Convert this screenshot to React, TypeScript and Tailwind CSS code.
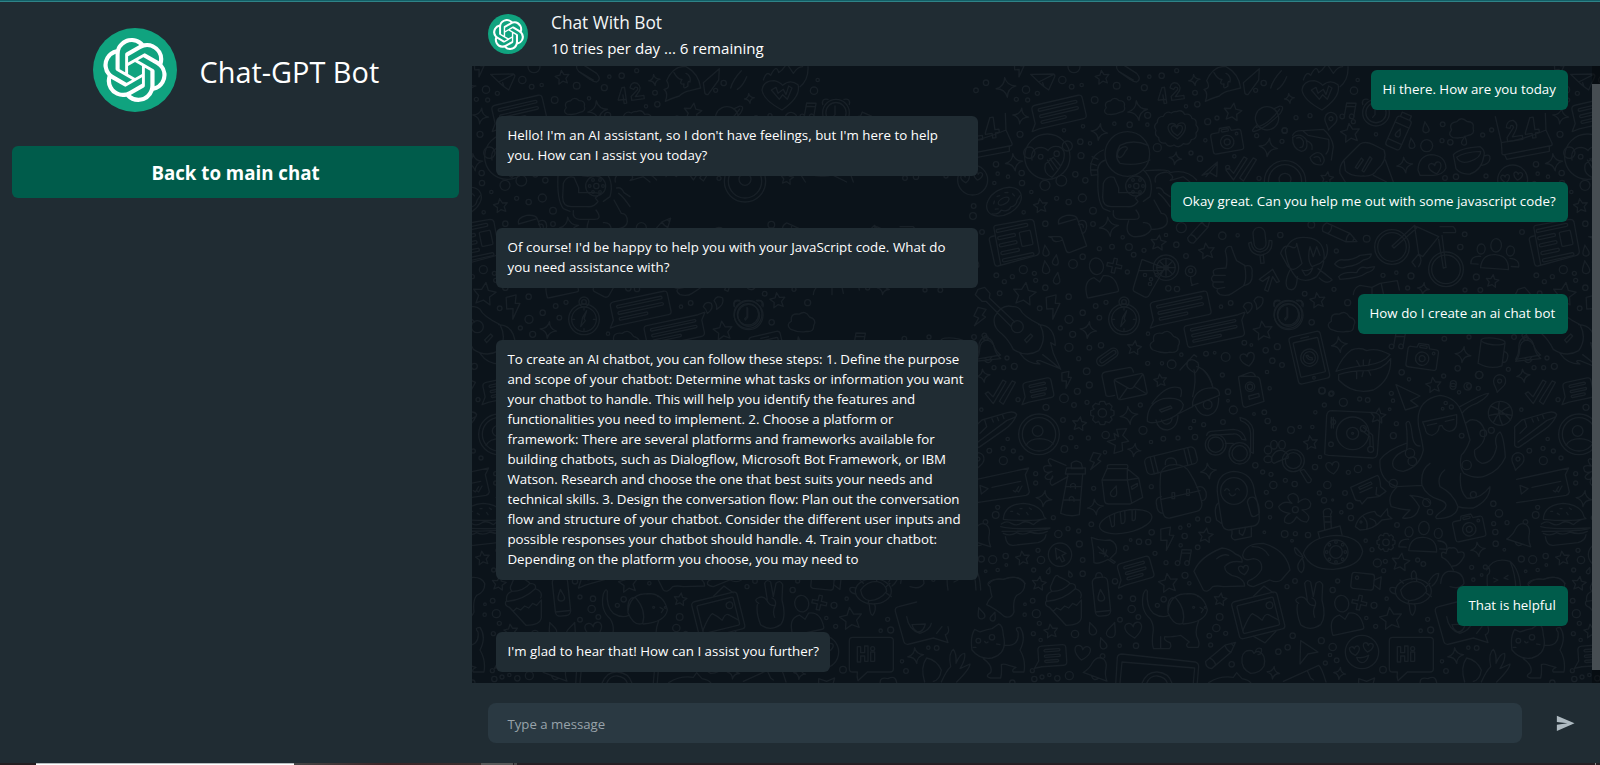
import React from "react";
import { SiOpenai } from "react-icons/si";

type Triple = [number, number, number];

/* ---------- doodle primitives ---------- */

const STAR = "M0 -1 L.28 -.38 L.95 -.31 L.46 .16 L.59 .81 L0 .49 L-.59 .81 L-.46 .16 L-.95 -.31 L-.28 -.38Z";
const SPARK = "M0 -1 Q.12 -.12 1 0 Q.12 .12 0 1 Q-.12 .12 -1 0 Q-.12 -.12 0 -1Z";
const HEART = "M0 .9 C-1.2 .1 -1.1 -.8 -.5 -.8 Q-.1 -.8 0 -.35 Q.1 -.8 .5 -.8 C1.1 -.8 1.2 .1 0 .9Z";
const DROP = "M0 -1 C.2 -.4 .55 0 .55 .45 A.55 .5 0 0 1 -.55 .45 C-.55 0 -.2 -.4 0 -1Z";
const BOLT = "M-.4 -1 L.5 -1 L.25 -.3 L.65 -.2 L-.3 1 L-.05 .1 L-.6 0Z";
const CLOUD = "M-.8 .6 Q-1.2 .3 -.8 0 Q-1 -.6 -.3 -.6 Q.1 -1 .5 -.5 Q1.1 -.4 .9 .1 Q1 .6 .4 .6 Q-.1 .8 -.8 .6Z";

const Shape = ({ d, at, rot = 0 }: { d: string; at: Triple; rot?: number }) => (
  <path d={d} transform={`translate(${at[0]} ${at[1]}) rotate(${rot}) scale(${at[2]})`} vectorEffect="non-scaling-stroke" />
);
const P = ({ d }: { d: string }) => <path d={d} vectorEffect="non-scaling-stroke" />;
const Dots = ({ list }: { list: Triple[] }) => (
  <>
    {list.map(([x, y, r], i) => (
      <circle key={i} cx={x} cy={y} r={r} vectorEffect="non-scaling-stroke" />
    ))}
  </>
);
const Many = ({ d, list, rot = 8 }: { d: string; list: Triple[]; rot?: number }) => (
  <>
    {list.map((at, i) => (
      <Shape key={i} d={d} at={at} rot={i % 2 ? rot : -rot} />
    ))}
  </>
);
const At = ({ x, y, rot = 0, children }: { x: number; y: number; rot?: number; children: React.ReactNode }) => (
  <g transform={`translate(${x} ${y}) rotate(${rot})`}>{children}</g>
);
const Box = ({ x, y, w, h, r = 6 }: { x: number; y: number; w: number; h: number; r?: number }) => (
  <rect x={x} y={y} width={w} height={h} rx={r} vectorEffect="non-scaling-stroke" />
);
const Ell = ({ x, y, rx, ry }: { x: number; y: number; rx: number; ry: number }) => (
  <ellipse cx={x} cy={y} rx={rx} ry={ry} vectorEffect="non-scaling-stroke" />
);

const Message = ({ x, y, w, h, rot, flip = false }: { x: number; y: number; w: number; h: number; rot: number; flip?: boolean }) => {
  const a = w / 2;
  const b = h / 2;
  return (
    <At x={x} y={y} rot={rot}>
      <g transform={flip ? "rotate(180)" : undefined}>
        <P d={`M${-a + 12} ${-b} H${a - 10} Q${a} ${-b} ${a} ${-b + 10} V${b - 10} Q${a} ${b} ${a - 10} ${b} H${-a + 8} L${-a - 14} ${b + 3} L${-a} ${b - 18} V${-b + 12} Q${-a} ${-b} ${-a + 12} ${-b}Z`} />
      </g>
      <Box x={-a + 18} y={-b + h * 0.18} w={w - 36} h={h * 0.11} r={4} />
      <Box x={-a + 18} y={-b + h * 0.45} w={w - 36} h={h * 0.11} r={4} />
      <Box x={-a + 18} y={-b + h * 0.7} w={w * 0.5} h={h * 0.11} r={4} />
    </At>
  );
};

const Camera = ({ x, y, rot }: { x: number; y: number; rot: number }) => (
  <At x={x} y={y} rot={rot}>
    <P d="M-38 -28 H-20 L-16 -40 H14 L18 -28 H38 Q46 -28 46 -20 V26 Q46 34 38 34 H-38 Q-46 34 -46 26 V-20 Q-46 -28 -38 -28Z" />
    <Dots list={[[0, 4, 20], [0, 4, 9], [32, -16, 4]]} />
    <Box x={-12} y={-35} w={22} h={7} r={3} />
  </At>
);
const Person = ({ x, y, rot = -12 }: { x: number; y: number; rot?: number }) => (
  <At x={x} y={y} rot={rot}>
    <Ell x={0} y={-42} rx={21} ry={25} />
    <P d="M-46 44 Q-50 -8 -14 -10 L0 6 L14 -10 Q50 -8 50 40 Q50 46 44 46 H-40 Q-46 46 -46 44Z" />
  </At>
);
const People = ({ x, y, rot }: { x: number; y: number; rot: number }) => (
  <At x={x} y={y} rot={rot}>
    <Ell x={0} y={-34} rx={16} ry={20} />
    <Ell x={-44} y={-20} rx={12} ry={15} />
    <Ell x={44} y={-20} rx={12} ry={15} />
    <P d="M-42 36 Q-40 -6 0 -6 Q40 -6 42 36Z" />
    <P d="M-50 26 H-72 Q-74 2 -44 2 M50 26 H72 Q74 2 44 2" />
  </At>
);
const Checks = ({ x, y, rot }: { x: number; y: number; rot: number }) => (
  <At x={x} y={y} rot={rot}>
    <P d="M-44 6 L-36 0 L-20 14 L6 -38 L16 -34 L-18 34Z M4 18 L34 -38 L44 -34 L12 34 L0 26Z" />
  </At>
);
const Plus = ({ x, y }: { x: number; y: number }) => (
  <At x={x} y={y} rot={12}>
    <P d="M-5 -22 H5 V-5 H22 V5 H5 V22 H-5 V5 H-22 V-5 H-5Z" />
  </At>
);
const Music = ({ x, y }: { x: number; y: number }) => (
  <At x={x} y={y} rot={10}>
    <P d="M-8 20 V-22 L20 -26 V14 M-8 -12 L20 -16" />
    <Dots list={[[-14, 20, 7], [14, 15, 7]]} />
  </At>
);
const Gear = ({ x, y, r }: { x: number; y: number; r: number }) => (
  <g>
    <circle cx={x} cy={y} r={r * 0.36} vectorEffect="non-scaling-stroke" />
    {[0, 45, 90, 135, 180, 225, 270, 315].map((a) => (
      <At key={a} x={x} y={y} rot={a}>
        <P d={`M${-r * 0.3} ${-r * 0.75} L${-r * 0.18} ${-r} H${r * 0.18} L${r * 0.3} ${-r * 0.75} L${r * 0.36} ${-r * 0.7}`} />
      </At>
    ))}
  </g>
);
const Clock = ({ x, y, r }: { x: number; y: number; r: number }) => (
  <g>
    <Dots list={[[x, y, r], [x, y, r * 0.76]]} />
    <P d={`M${x - 3} ${y - r * 0.5} V${y + 6} L${x - 10} ${y + 14} M${x - r} ${y - r * 0.6} Q${x - r * 1.1} ${y - r * 1.1} ${x - r * 0.6} ${y - r} M${x + r} ${y - r * 0.6} Q${x + r * 1.1} ${y - r * 1.1} ${x + r * 0.6} ${y - r}`} />
  </g>
);
const Bell = ({ x, y, rot }: { x: number; y: number; rot: number }) => (
  <At x={x} y={y} rot={rot}>
    <P d="M-38 26 Q-24 10 -22 -10 Q-18 -32 0 -34 Q18 -32 22 -10 Q24 10 38 26Z M-10 28 Q0 40 10 28" />
    <circle cx={0} cy={-40} r={7} vectorEffect="non-scaling-stroke" />
  </At>
);
const Pin = ({ x, y }: { x: number; y: number }) => (
  <At x={x} y={y} rot={12}>
    <P d="M0 26 C-6 10 -20 4 -18 -10 A18 18 0 0 1 18 -10 C20 4 6 10 0 26Z" />
    <circle cx={0} cy={-9} r={6} vectorEffect="non-scaling-stroke" />
  </At>
);
const Pencil = ({ x, y, rot, s = 1 }: { x: number; y: number; rot: number; s?: number }) => (
  <g transform={`translate(${x} ${y}) rotate(${rot}) scale(${s})`}>
    <P d="M-50 -14 H26 L56 0 L26 14 H-50 Q-62 0 -50 -14Z M-34 -14 Q-26 0 -34 14 M26 -14 Q20 0 26 14 M44 -6 V6" />
  </g>
);

/* ---------- doodle regions ---------- */

const RegionA = () => (
  <g transform="translate(970 60) scale(.33333)">
    <Dots
      list={[[48, 68, 8], [18, 91, 7], [168, 89, 11], [202, 100, 6], [277, 60, 11], [305, 80, 7], [335, 75, 5], [312, 20, 18], [440, 77, 10], [477, 115, 5], [523, 83, 9], [538, 50, 5], [575, 47, 8], [620, 32, 6], [374, 120, 10], [139, 118, 6], [173, 120, 6], [150, 223, 9], [433, 191, 5], [479, 194, 8], [532, 194, 5], [533, 166, 9], [562, 263, 12], [331, 245, 8], [360, 250, 5], [282, 211, 5], [333, 287, 9], [339, 199, 5], [663, 279, 6], [690, 296, 8], [713, 185, 9], [741, 174, 6], [682, 133, 8], [675, 98, 7], [881, 69, 8], [857, 91, 6], [648, 139, 5], [706, 241, 5], [793, 289, 5], [860, 227, 6], [936, 244, 6], [944, 212, 8], [78, 313, 8], [83, 341, 5], [114, 350, 5], [155, 339, 8], [156, 369, 8], [73, 369, 5], [316, 343, 8], [346, 361, 8], [337, 414, 12], [296, 426, 8], [260, 415, 6], [369, 452, 10], [369, 492, 7], [226, 491, 8], [161, 457, 5], [11, 438, 7], [184, 396, 5], [36, 516, 7], [9, 468, 10], [634, 503, 15], [619, 554, 8], [588, 525, 5], [757, 527, 11], [803, 526, 5], [931, 525, 8], [648, 588, 7], [388, 566, 6], [426, 560, 7], [477, 561, 10], [491, 584, 7], [522, 571, 6], [458, 532, 5], [472, 636, 6], [338, 590, 8], [309, 612, 13], [160, 629, 12], [193, 640, 6], [197, 661, 6], [226, 683, 8], [127, 650, 6], [79, 646, 7], [103, 665, 6], [89, 700, 7], [209, 745, 7], [296, 710, 8], [338, 758, 8], [377, 738, 7], [388, 773, 7], [408, 727, 6], [297, 778, 12], [271, 804, 6], [308, 823, 9], [297, 862, 12], [358, 863, 7], [393, 856, 8], [326, 896, 6], [534, 821, 5], [533, 910, 6], [576, 910, 5], [605, 913, 13], [634, 884, 5], [708, 881, 7], [734, 878, 4], [595, 685, 8], [621, 687, 8], [753, 740, 5], [782, 729, 7], [823, 848, 7], [844, 855, 4], [767, 891, 13], [887, 871, 8], [922, 860, 9], [907, 902, 8], [936, 915, 7], [111, 894, 6], [72, 923, 6], [101, 923, 6], [133, 919, 9], [773, 322, 6], [867, 355, 6], [12, 831, 7]]}
    />
    <Many d={STAR} list={[[397, 53, 22], [788, 157, 28], [212, 438, 22], [565, 549, 24], [710, 574, 25], [163, 703, 36], [879, 813, 30], [493, 864, 22]]} />
    <Many d={SPARK} list={[[108, 82, 30], [152, 168, 24], [503, 152, 30], [388, 216, 25], [132, 307, 26], [616, 295, 19], [673, 60, 17], [895, 262, 28], [417, 500, 29], [355, 810, 25], [958, 115, 15]]} />
    <Message x={267} y={156} w={155} h={72} rot={-13} />
    <Message x={632} y={745} w={175} h={72} rot={-12} />
    <Message x={733} y={813} w={175} h={66} rot={-12} flip />
    <Many d={CLOUD} list={[[434, 140, 32], [586, 848, 44]]} />
    <Many d={DROP} list={[[227, 572, 17], [257, 600, 16], [227, 622, 20], [261, 655, 18]]} />
    <Many d={BOLT} list={[[250, 742, 34], [28, 772, 28], [148, 26, 24]]} rot={14} />
    <Shape d={HEART} at={[833, 898, 23]} rot={-12} />
    <P d="M182 43 L250 42 Q256 44 254 50 L236 90 L222 80 L206 66Z M206 66 L250 44 M222 80 L218 68" />
    <P d="M440 18 Q448 8 462 16 L500 40 Q516 58 500 66 Q490 66 480 58 L446 34 Q438 26 440 18Z M446 34 L490 60" />
    <P d="M710 62 Q730 16 768 20 Q806 40 812 84 L780 92 Q760 96 748 108 Q722 116 706 124 Q716 98 702 88 Q724 86 710 62Z M732 38 Q744 60 756 58 Q746 74 762 72 Q758 92 774 78 Q772 60 780 66 Q784 48 768 40" />
    <P d="M820 68 L868 26 L866 60 L834 104 Q824 104 824 96Z M902 84 Q908 60 934 32 M922 88 Q940 76 950 50" />
    <At x={598} y={98} rot={-8}>
      <P d="M-36 18 H-14 M-36 16 L-20 -18 H-12 V30 H-20 V4 M4 -14 Q10 -34 28 -24 Q42 -10 24 6 L16 14 H42 V24 H4 V12 L26 -6 Q28 -14 20 -14 L14 -8Z" />
    </At>
    <P d="M620 155 q16 -8 24 8 q18 -4 22 12 q16 2 12 20 q12 12 0 24 q4 18 -14 20 q-6 18 -24 12 q-12 16 -28 4 q-16 10 -26 -6 q-20 2 -20 -16 q-14 -8 -8 -22 q-10 -14 4 -24 q0 -18 18 -18 q8 -18 24 -10 q8 -6 16 -4Z" />
    <Shape d={HEART} at={[621, 212, 28]} rot={-4} />
    <Shape d={HEART} at={[621, 211, 18]} rot={-4} />
    <Camera x={771} y={242} rot={-10} />
    <At x={891} y={175} rot={-24}>
      <circle cx={0} cy={0} r={35} vectorEffect="non-scaling-stroke" />
      <P d="M-34 6 Q-62 14 -52 20 Q-20 26 40 4 Q66 -12 50 -18 L30 -18 M-40 12 Q0 18 46 -10" />
    </At>
    <Dots list={[[232, 290, 68], [212, 290, 7], [260, 281, 8], [178, 278, 17], [292, 258, 15], [225, 376, 15], [274, 362, 16]]} />
    <P d="M186 300 Q180 264 214 262 Q228 264 234 272 Q244 256 266 260 Q290 268 280 302 Q270 326 246 352 Q218 340 226 312 L250 292 L272 318 M232 300 L250 330 M240 296 L262 326" />
    <Dots list={[[472, 282, 67], [497, 378, 30], [499, 378, 8], [479, 378, 4], [489, 360, 4], [510, 360, 4], [519, 378, 4], [510, 396, 4], [489, 396, 4]]} />
    <P d="M540 300 Q500 320 450 310 Q430 290 450 256 Q490 236 534 256 M442 284 Q446 262 466 260 Q478 262 466 274 Q456 296 446 292Z M400 270 Q352 290 364 346 L384 344 Q378 310 406 300 M366 290 L384 298 M362 310 L380 316 M362 330 L380 330 M384 346 Q380 420 400 446 L420 454 M400 370 Q410 346 432 352 L446 384 V398 H490 L512 400 L496 414 L504 424 Q494 442 470 440 H424 Q398 440 398 412Z M520 330 Q554 360 540 410 L520 424 M430 452 Q426 478 450 478 H490 Q520 480 498 450 M476 482 Q462 520 490 530 Q530 532 544 508 Q542 486 520 488 M544 508 Q590 508 592 484 Q592 460 574 460 L552 420 M528 332 Q600 326 600 338 Q650 326 680 360" />
    <P d="M556 366 Q550 340 590 336 Q620 350 600 362 L640 350 Q660 366 660 366 M560 384 Q574 380 582 398 L600 410 M566 400 Q580 410 600 440" />
    <At x={102} y={425} rot={-30}>
      <Ell x={0} y={0} rx={56} ry={38} />
      <Ell x={0} y={-2} rx={18} ry={9} />
      <P d="M-50 14 Q-34 26 -20 18 Q-6 34 10 24 Q26 30 36 16 L52 8 M-30 -10 l6 -6 M-10 -24 l8 2 M16 -22 l8 4 M34 -8 l2 8 M-34 6 l8 4" />
    </At>
    <P d="M72 506 Q70 498 78 496 L180 478 Q190 478 192 486 L208 574 Q208 584 200 586 L84 618 Q76 620 74 612 L58 540 Q56 530 72 528 M72 506 L92 614" />
    <At x={136} y={542} rot={-12}>
      <Box x={-50} y={-44} w={96} h={9} r={4} />
      <Box x={-50} y={-22} w={54} h={9} r={4} />
      <Box x={-50} y={0} w={54} h={9} r={4} />
      <Box x={16} y={-22} w={34} h={44} r={4} />
      <Box x={-50} y={24} w={56} h={9} r={4} />
      <Box x={-50} y={46} w={96} h={9} r={4} />
    </At>
    <P d="M266 492 L322 476 L350 558 L298 578 Q290 578 288 570 L278 540 Q250 552 246 534 L236 530 L268 530 Q276 530 278 540 M266 492 Q260 474 290 466 Q318 464 322 476 M326 484 Q348 474 350 498 Q348 520 336 520 M326 494 Q340 488 340 502" />
    <Person x={388} y={660} />
    <Plus x={433} y={617} />
    <Dots list={[[588, 623, 38], [588, 623, 28], [588, 623, 7], [662, 634, 16], [662, 632, 6], [525, 645, 5], [543, 658, 5], [560, 645, 5], [540, 672, 5]]} />
    <P d="M516 598 L584 624 L536 708 Q530 714 522 710 L492 694 Q488 690 490 684Z M506 632 H580 M588 595 V650 M560 623 H616 M568 603 L608 643 M568 643 L608 603 M662 650 Q662 668 668 676 M664 676 L684 670" />
    <P d="M766 574 Q768 556 784 560 Q794 590 800 602 L824 616 Q832 660 820 678 L786 700 Q772 710 750 704 Q736 694 744 686 Q724 684 730 666 Q718 656 732 644 Q724 628 744 626 L768 624 Q774 600 766 574Z M744 686 L764 682 M730 666 H760 M732 646 H766 M826 618 Q850 612 846 640 Q850 670 824 676" />
    <P d="M868 658 L908 628 L928 664 L920 668 L908 650 L894 694 L884 690 L898 650 L878 664Z M820 740 Q826 722 844 730 Q852 746 832 760 Q830 748 820 740Z M852 722 Q860 704 878 714 Q884 734 860 748 Q862 734 852 722Z" />
    <Clock x={956} y={766} r={43} />
    <Dots list={[[142, 800, 18], [462, 778, 46], [462, 778, 37], [462, 726, 15], [462, 726, 7]]} />
    <P d="M462 776 L470 752 L458 772 L452 800 L466 782Z M462 744 V750 M428 778 H434 M490 778 H496 M462 806 V812" />
    <P d="M16 704 L24 688 L44 682 L60 700 L58 714 L134 786 M16 704 L36 724 L48 724 L124 800 M128 740 Q96 730 74 770 Q66 800 96 822 Q116 840 130 868 Q170 894 206 872 Q232 836 210 794 Q160 770 150 748 Q140 738 128 740Z M164 840 L182 822 L188 828 L170 848Z M206 794 Q254 796 256 856 L242 848 Q250 880 250 880 L272 928 Q240 900 218 884 M150 880 Q172 912 210 912 Q190 900 210 902 L270 926" />
    <At x={412} y={891} rot={-35}>
      <Box x={-36} y={-14} w={72} h={28} r={14} />
      <Box x={-26} y={-6} w={56} h={12} r={6} />
    </At>
    <Bell x={50} y={866} rot={-10} />
    <At x={870} y={548} rot={-6}>
      <Box x={-18} y={-46} w={36} h={66} r={18} />
      <P d="M-34 -2 Q-34 34 0 38 Q36 34 36 -2 L28 -4 Q26 26 0 28 Q-26 26 -26 -4Z M-4 38 V62 H6 V38" />
    </At>
    <Pencil x={690} y={510} rot={-48} s={0.85} />
    <Checks x={812} y={328} rot={6} />
    <P d="M696 346 L742 306 L740 350 L720 338Z M708 350 L742 310" />
    <Dots list={[[945, 364, 62], [945, 364, 50], [945, 358, 18]]} />
    <P d="M630 930 L672 884 L680 890 M650 908 Q664 890 684 908 Q690 926 674 940 M670 936 Q640 920 656 900 M680 920 Q716 930 728 980" />
  </g>
);

const RegionB = () => (
  <g transform="translate(970 370) scale(.33333)">
    <Dots
      list={[[350, 4, 10], [358, 45, 9], [322, 64, 9], [282, 85, 13], [312, 105, 7], [351, 97, 6], [228, 112, 9], [144, 89, 6], [34, 119, 5], [279, 150, 7], [511, 105, 6], [407, 195, 11], [519, 181, 12], [303, 203, 6], [355, 204, 6], [283, 237, 10], [319, 231, 5], [405, 247, 5], [543, 216, 5], [580, 206, 7], [624, 204, 6], [675, 201, 8], [661, 174, 5], [672, 153, 5], [701, 164, 6], [759, 156, 7], [774, 65, 8], [774, 92, 4], [790, 120, 12], [757, 15, 6], [899, 55, 5], [891, 6, 5], [883, 127, 7], [893, 153, 8], [852, 132, 4], [913, 176, 6], [113, 207, 5], [58, 242, 7], [99, 235, 6], [130, 243, 6], [100, 272, 12], [153, 264, 6], [197, 311, 6], [197, 339, 6], [371, 355, 6], [544, 350, 6], [83, 412, 6], [77, 435, 10], [250, 443, 6], [265, 492, 11], [294, 476, 6], [326, 483, 6], [364, 463, 7], [328, 522, 9], [338, 570, 7], [204, 541, 6], [213, 570, 11], [68, 569, 12], [107, 558, 8], [34, 567, 9], [47, 604, 4], [83, 600, 5], [109, 585, 4], [191, 600, 6], [338, 611, 8], [188, 692, 7], [199, 731, 12], [164, 734, 5], [165, 703, 4], [208, 760, 6], [190, 791, 6], [212, 810, 5], [315, 792, 11], [435, 634, 8], [450, 681, 6], [489, 686, 8], [485, 717, 11], [505, 741, 7], [450, 749, 7], [449, 827, 5], [498, 827, 8], [562, 706, 6], [581, 688, 8], [555, 550, 6], [588, 578, 6], [645, 616, 9], [658, 640, 5], [545, 487, 8], [535, 516, 8], [507, 515, 8], [482, 510, 4], [468, 534, 7], [631, 473, 5], [657, 466, 5], [644, 498, 8], [632, 526, 5], [683, 532, 7], [683, 447, 6], [714, 449, 8], [883, 487, 4], [900, 442, 5], [889, 367, 6], [897, 404, 11], [878, 306, 6], [903, 313, 6], [856, 286, 8], [910, 345, 11], [946, 331, 6], [749, 741, 10], [739, 774, 11], [718, 797, 7], [722, 825, 6], [767, 790, 6], [785, 883, 8], [925, 845, 8], [953, 832, 8], [187, 902, 6], [193, 927, 8], [216, 921, 6], [238, 915, 5], [262, 925, 8], [298, 917, 12], [127, 938, 8], [944, 492, 10], [951, 650, 6]]}
    />
    <Many d={STAR} list={[[571, 32, 20], [328, 162, 22], [158, 565, 22], [207, 641, 22], [243, 784, 22], [707, 497, 23], [595, 640, 30], [751, 689, 20]]} />
    <Many d={SPARK} list={[[477, 136, 27], [493, 240, 20], [715, 303, 24], [222, 386, 24], [376, 411, 24], [910, 908, 19], [40, 17, 20]]} />
    <Many d={DROP} list={[[32, 730, 18], [70, 740, 14], [366, 776, 20], [426, 780, 24], [398, 820, 18], [236, 602, 10], [300, 612, 10], [433, 364, 17]]} rot={20} />
    <Many d={BOLT} list={[[290, 30, 24], [375, 275, 26], [592, 507, 33]]} rot={12} />
    <Many d={HEART} list={[[491, 780, 27], [337, 848, 25], [821, 600, 16]]} />
    <Checks x={90} y={68} rot={4} />
    <Message x={205} y={60} w={86} h={60} rot={-12} />
    <Message x={497} y={602} w={100} h={66} rot={-16} />
    <Message x={247} y={857} w={84} h={62} rot={-4} />
    <Music x={640} y={562} />
    <P d="M396 18 Q396 8 406 6 L480 -8 Q488 -6 490 6 M396 18 L408 76 Q412 82 434 76" />
    <At x={481} y={50} rot={-12}>
      <Box x={-44} y={-32} w={90} h={64} r={8} />
      <P d="M-42 -28 L-6 4 Q2 8 8 4 L44 -28 M-40 30 L-10 2 M42 30 L12 2" />
    </At>
    <Gear x={397} y={129} r={35} />
    <Dots list={[[207, 193, 61], [207, 193, 50], [203, 183, 16], [270, 554, 35]]} />
    <P d="M168 226 Q180 206 208 206 Q240 208 250 222 M256 534 L288 550 L276 556 L284 572 L276 576 L268 560 L260 568Z" />
    <P d="M14 170 L36 150 Q70 140 112 128 Q134 122 140 134 Q130 160 104 178 L30 230 Q20 236 14 226Z M24 216 L110 152 Q126 146 138 140 M44 150 L50 170 L30 190 M66 146 l4 10 M82 142 l4 10 M98 136 l4 10" />
    <P d="M440 178 L470 176 L458 196 L476 214 L456 218 L458 242 L432 250 L436 226 L412 214 L436 208 L432 190 L446 200Z" />
    <P d="M304 280 Q318 266 334 280 L338 296 H304Z M290 294 H346 V312 H286Z M294 312 L272 430 Q300 442 328 434 L338 314 M286 350 H332 M280 390 H330 M302 352 V344 Q310 336 316 344 V356 M298 392 V384 Q306 374 312 386 V394 M288 286 L240 266 Q228 270 244 288 Q216 284 222 298 Q224 312 246 304 Q214 320 232 328 Q250 330 248 318 Q234 340 246 346 L294 320" />
    <P d="M412 292 Q410 284 420 284 L470 284 Q476 286 472 296 M412 294 L396 330 L404 394 Q406 402 416 402 H478 Q486 402 484 394 L472 330 H396 M412 296 H472 L472 330 L506 324 L518 382 L484 400 M472 296 L506 324 M484 350 L502 340 L502 348 L486 358Z" />
    <At x={603} y={272} rot={-14}>
      <Box x={-78} y={-26} w={156} h={52} r={14} />
      <P d="M-58 -26 V26 M-46 -26 V26 M46 -26 V26 M58 -26 V26" />
    </At>
    <P d="M572 310 Q580 284 614 284 Q648 284 660 310 Q686 350 696 400 Q696 420 680 424 L600 444 Q584 446 580 432 Q566 380 572 310Z M574 388 L690 362 M606 368 h8 v18 h-8Z M650 358 h8 v18 h-8Z M574 380 Q554 382 560 406 Q562 430 580 430 M680 352 Q700 344 708 366 Q712 390 696 392 M586 284 Q584 264 604 264 Q618 264 620 282" />
    <P d="M532 154 Q530 100 580 86 Q632 80 640 104 Q640 126 600 146 Q564 160 540 158Z M546 100 Q590 40 630 54 Q638 60 632 80 M568 120 L602 108 L606 114 L574 126Z M624 132 L668 110 M668 96 Q680 50 734 54 Q750 60 748 76 L668 108Z M672 0 Q680 30 668 80 M700 0 Q720 20 728 50" />
    <P d="M558 150 Q564 180 592 180 Q622 176 624 136 M574 150 Q580 164 592 162 Q606 158 606 144 M676 108 Q690 140 716 136 Q746 128 746 84" />
    <Dots list={[[713, 104, 13], [737, 224, 31], [737, 224, 23], [809, 250, 32], [809, 250, 23]]} />
    <P d="M806 20 L838 8 Q850 4 856 18 M806 26 Q804 20 812 18 L858 20 Q868 20 870 30 L882 94 L826 112 Q820 112 818 104Z M836 78 L866 70 L868 80 L838 88Z" />
    <Dots list={[[840, 50, 14], [840, 50, 8]]} />
    <P d="M710 196 Q712 186 722 184 L790 178 Q820 180 828 210 L816 208 Q806 190 790 192 L720 196 M766 220 H790 M810 142 Q844 150 850 180 V250 L842 246 V190 Q840 160 812 152Z" />
    <P d="M742 366 Q738 310 790 304 Q850 306 854 370 Q866 400 868 446 Q866 466 850 468 L776 480 Q758 478 756 460 Q746 400 742 366Z M832 396 Q836 378 852 382 Q868 396 868 430 Q846 450 842 430Z M744 400 Q730 412 740 450 L754 460 M786 482 V492 Q780 504 794 510 L844 500 V472 M808 480 V490 L818 496 Q826 480 826 474 M764 362 Q770 350 778 362 M796 360 Q802 350 808 360 M778 370 Q786 384 796 372" />
    <circle cx={792} cy={363} r={40} vectorEffect="non-scaling-stroke" />
    <P d="M100 448 Q102 404 160 400 Q214 404 222 440 L228 446 Q180 456 100 448Z M94 462 Q110 450 124 460 Q140 470 156 458 Q172 450 190 464 Q206 450 226 446 M92 470 Q130 480 240 474 Q230 484 96 484 M100 490 Q120 500 140 488 Q160 498 180 486 Q210 496 232 484 M106 500 Q110 528 130 526 L204 518 Q226 512 228 494 M122 424 h6 M142 430 l6 4 M150 416 h6 M170 428 l4 6 M178 414 l6 4" />
    <At x={467} y={455} rot={-12}>
      <Ell x={0} y={0} rx={80} ry={33} />
      <P d="M-44 -28 V6 Q-34 10 -34 -4 L-28 -28 M-10 -32 L-14 2 Q-4 8 0 -8 L4 -32 M26 -30 L20 0 Q30 6 32 -10 L36 -26" />
    </At>
    <P d="M364 502 Q390 514 420 510 Q446 520 438 548 L420 566 L436 576 L432 580 L414 568 Q384 584 372 578 Q372 540 364 502Z M384 530 L414 560 M388 548 L402 552 L400 536 M404 560 L410 540" />
    <P d="M246 640 Q258 606 266 620 Q290 630 300 640 Q320 640 316 656 Q340 664 332 684 M246 640 Q236 656 246 664 Q226 670 230 694 Q280 690 316 656 M246 664 Q280 664 300 640 M228 694 Q222 706 238 712 L288 766 Q330 766 334 744 V690 M238 712 L250 724 L260 714 L272 720 L284 708 L296 714 L308 700 L320 706 L332 692" />
    <At x={393} y={676} rot={-6}>
      <Box x={-22} y={-54} w={46} h={116} r={14} />
      <P d="M-10 -54 Q-10 -68 0 -68 Q10 -68 10 -54 M-22 48 H22" />
      <Shape d={DROP} at={[0, 0, 18]} />
    </At>
    <P d="M60 634 Q74 624 100 628 Q150 612 164 640 Q166 666 140 676 Q128 690 132 726 Q124 746 104 740 Q76 716 50 704 Q54 690 66 680 Q62 666 60 650 Q48 642 60 634Z" />
    <P d="M550 834 Q544 820 550 780 Q550 760 540 746 Q510 720 520 672 Q528 652 532 664 Q528 710 550 730 Q576 746 596 736 M594 724 Q600 676 640 672 Q700 664 712 720 Q706 756 640 762 M594 728 Q590 680 616 682 Q650 720 638 760 Q612 770 594 728Z M686 752 Q672 790 684 808 Q690 824 684 832 H654 Q644 824 658 816 L632 796 Q600 802 584 800 Q580 812 600 818 Q606 830 598 836 H550 M572 834 V800 M650 672 Q676 668 684 680 M690 712 L700 718 L694 728" />
    <Dots list={[[671, 712, 3], [706, 712, 3]]} />
    <At x={865} y={737} rot={-14}>
      <Box x={-70} y={-58} w={140} h={114} r={10} />
      <Box x={-56} y={-44} w={112} h={86} r={4} />
      <P d="M-56 32 Q-26 -8 -16 -10 Q-4 0 8 16 Q22 -2 30 4 L56 28 M-30 56 L0 84 L40 58 M0 -60 L38 -82 L60 -56" />
      <circle cx={40} cy={-22} r={10} vectorEffect="non-scaling-stroke" />
    </At>
    <P d="M672 604 Q690 560 756 534 Q780 536 796 552 Q820 560 816 576 Q780 570 764 590 Q764 612 800 620 Q824 630 824 648 L760 650 Q740 646 728 650 Q712 670 700 660Z M960 600 Q950 540 880 520 Q824 520 818 556 Q822 576 850 566 Q880 570 874 600 Q860 624 836 632 Q824 646 850 650 L900 630 Q920 640 934 630Z M740 566 Q760 550 776 556 M846 530 Q880 528 896 556" />
    <P d="M6 840 Q0 800 14 778 L30 786 Q50 778 66 776 L86 762 Q98 764 100 796 Q114 850 66 864 Q30 870 6 840Z M102 826 Q150 830 144 786 Q132 772 150 772 Q170 800 150 840 Q168 870 162 906 H130 Q124 898 138 892 L116 886 Q100 880 94 884 Q96 910 92 924 H62 Q42 920 62 908 Q70 888 40 866 M44 814 Q48 822 54 816 M10 832 h8 M80 822 l10 2" />
    <Dots list={[[25, 812, 7], [66, 802, 8]]} />
    <Pencil x={754} y={853} rot={-40} />
    <P d="M846 842 Q820 838 816 864 Q812 896 842 910 Q870 910 882 888 Q890 854 866 844 Q856 844 852 850 Q850 846 846 842Z M856 846 Q860 830 874 836 Q878 852 864 854" />
    <Bell x={384} y={896} rot={20} />
    <P d="M436 960 L442 862 Q444 852 456 852 L676 876 Q686 880 686 890 L680 960 M448 960 L456 876 L674 894 L668 960 M516 940 Q530 904 562 906 Q596 908 606 940 M530 940 Q540 916 562 918 Q588 922 592 940 M716 938 Q750 916 790 922 L800 908 L816 926 Q836 930 842 938" />
    <P d="M20 328 L176 294 L166 314 L178 366 Q176 374 168 376 L20 398 M30 346 L54 356 L34 372Z M66 352 L152 334 M130 362 L136 366 L146 350 M140 362 L146 366 L156 348" />
    <At x={918} y={246}>
      <Ell x={-24} y={22} rx={12} ry={10} />
      <Ell x={-24} y={-6} rx={11} ry={12} />
      <Ell x={-6} y={-22} rx={10} ry={13} />
      <Ell x={18} y={-22} rx={10} ry={13} />
      <P d="M-12 14 Q0 -10 20 -4 Q40 6 36 18 Q20 22 -6 34 Q-18 28 -12 14Z" />
    </At>
  </g>
);

const RegionC = () => (
  <g transform="translate(1160 50) scale(.33333)">
    <Dots
      list={[[593, 90, 5], [582, 122, 11], [450, 197, 6], [408, 203, 6], [374, 241, 8], [648, 253, 5], [580, 215, 6], [848, 223, 7], [846, 272, 6], [871, 277, 8], [968, 255, 6], [995, 240, 6], [888, 380, 8], [855, 384, 7], [978, 378, 6], [454, 524, 10], [620, 566, 10], [529, 603, 6], [669, 676, 6], [709, 668, 5], [753, 678, 9], [743, 714, 6], [914, 553, 7], [901, 591, 8], [949, 681, 9], [961, 720, 7], [915, 720, 6], [563, 758, 9], [522, 718, 6], [434, 731, 7], [455, 817, 8], [853, 866, 7], [927, 861, 6], [851, 978, 6], [893, 955, 8], [957, 975, 11], [879, 1009, 9], [927, 1008, 7], [725, 967, 8], [486, 1022, 10], [515, 1030, 7], [800, 287, 18], [1045, 958, 6]]}
    />
    <Many d={STAR} list={[[571, 250, 30], [501, 385, 20], [473, 752, 24], [997, 694, 20]]} />
    <Many d={SPARK} list={[[734, 345, 24], [790, 716, 18], [538, 884, 24], [909, 914, 24]]} />
    <Many d={DROP} list={[[797, 232, 17], [913, 272, 14], [755, 280, 16]]} />
    <Many d={CLOUD} list={[[905, 236, 38], [546, 818, 40]]} />
    <P d="M486 180 Q430 150 426 120 Q430 92 462 92 Q480 96 488 106 Q510 86 534 104 Q544 140 486 180Z M454 120 L468 112 L474 130 L490 118 L498 134 L506 108 L516 114 L502 148 L488 134 L478 148Z M430 90 Q440 60 452 76 Q470 40 476 68 Q490 60 500 40 L520 70 Q534 50 548 50 M540 110 Q566 90 564 50" />
    <Music x={564} y={182} />
    <Clock x={648} y={188} r={40} />
    <Pin x={511} y={215} />
    <At x={717} y={243} rot={24}>
      <Box x={-22} y={-42} w={46} h={96} r={8} />
      <P d="M-22 -20 H24 M-22 34 H24 M-14 -42 V-56 H16 V-42" />
      <Shape d={DROP} at={[1, 6, 13]} />
    </At>
    <P d="M880 314 Q900 294 960 290 Q976 300 972 316 Q966 360 930 372 Q900 374 888 356Z M890 322 Q910 306 962 304 Q964 322 930 334 Q900 344 890 322Z M972 318 Q992 310 990 326 Q988 342 966 346" />
    <P d="M1006 200 L1024 278 M1156 190 L1158 240 L1176 280 Q1178 288 1168 288 L1034 314 Q1024 316 1026 306 L1024 278 Q1090 270 1158 240 M1034 314 L1040 328 L1168 304 V290" />
    <At x={1088} y={236} rot={-8}>
      <P d="M-48 -10 Q-44 -32 -24 -28 Q-8 -16 -24 6 L-34 20 H-4 V32 H-50 V20 L-26 -8 Q-28 -16 -34 -14 L-38 -6Z M6 14 L26 -30 H36 V8 H48 V18 H36 V32 H26 V18 H6Z" />
    </At>
    <P d="M398 256 Q404 240 430 242 L490 238 Q516 260 520 290 L514 330 M398 262 Q396 296 424 304 Q448 300 438 268 Q420 246 398 262Z M410 264 Q424 258 430 274 Q432 294 420 292 M440 272 Q460 280 456 298 M450 322 Q470 300 484 312 Q500 330 486 344 Q456 348 450 322Z M462 322 Q480 314 482 334 M430 244 L444 256 L506 268 Q510 300 498 312" />
    <P d="M552 330 L600 282 Q616 272 640 284 L672 300 Q684 330 650 360 Q640 380 610 378 Q570 380 556 362Z M552 330 Q536 350 540 370 L556 396 M586 352 L604 324 L610 330 L592 356Z M606 362 L630 320 L636 326 L612 366Z M676 330 L700 396 M640 376 L680 396" />
    <P d="M774 360 Q776 318 812 314 Q856 316 858 354 Q850 374 820 376 L780 376Z" />
    <Shape d={HEART} at={[826, 354, 20]} rot={-14} />
    <Dots list={[[1058, 390, 45]]} />
    <Many d={HEART} list={[[1036, 386, 14], [1074, 378, 14]]} />
    <Pencil x={540} y={552} rot={24} />
    <P d="M376 600 Q390 562 430 562 Q480 562 490 600 Q500 640 470 680 Q440 700 410 684 Q380 650 376 600Z M362 610 Q372 580 392 590 Q410 600 410 580 Q420 620 426 640 Q400 670 384 650Z M500 584 Q510 620 480 640 L456 650 Q440 630 450 590 L460 620 L470 590 L480 616 M390 660 Q370 700 384 716 Q410 730 412 680 M474 656 Q520 690 516 690 Q500 706 478 684 M426 660 Q440 666 458 654 Q450 676 436 676Z" />
    <P d="M524 642 Q536 626 552 630 Q580 630 600 616 L634 612 Q634 626 610 630 Q590 648 560 650 Q540 660 524 642Z M536 680 Q550 664 590 668 Q600 646 620 654 L644 650 Q640 664 620 668 Q600 684 540 688Z" />
    <Dots list={[[696, 591, 52], [696, 591, 43], [858, 658, 52], [858, 658, 43]]} />
    <P d="M696 588 L764 526 L770 534 L702 594Z M770 530 L836 560 L788 620 L776 612 L764 530 M846 556 L858 652 L850 654 L836 568 M776 612 L756 636 L766 650 M840 530 H880 Q890 540 886 548 H850 M776 612 Q790 630 776 650" />
    <People x={1006} y={620} rot={4} />
    <Clock x={384} y={793} r={42} />
    <P d="M580 734 Q582 712 600 706 L636 712 L660 700 L712 692 L718 720 M636 712 V734 M664 702 L670 730" />
    <At x={448} y={923} rot={-13}>
      <Box x={-48} y={-72} w={96} h={144} r={10} />
      <Box x={-38} y={-54} w={76} h={106} r={3} />
      <Dots list={[[0, 0, 26], [0, 0, 18], [0, 62, 4]]} />
      <P d="M-12 -62 H12 M-8 -8 Q-6 8 8 8 L8 2 L2 0 L-2 -4 L-2 -8Z" />
    </At>
    <P d="M528 964 Q546 920 574 900 Q600 890 620 902 Q650 892 690 914 Q670 940 620 946 Q570 950 528 964Z M536 974 Q570 962 620 962 Q670 960 692 926 Q694 990 640 1020 Q580 1036 536 990Z M590 932 L600 950 M610 930 V946 M630 928 L626 946 M590 964 V986 M610 964 L606 980 M626 962 L632 976" />
    <Music x={712} y={872} />
    <Camera x={787} y={922} rot={8} />
    <At x={996} y={906} rot={6}>
      <Ell x={0} y={-32} rx={36} ry={10} />
      <P d="M-36 -30 L-38 38 Q0 54 34 38 L36 -30 M36 -6 Q52 -2 48 14 Q46 30 34 26" />
    </At>
    <Bell x={1102} y={904} rot={-6} />
  </g>
);

const RegionD = () => (
  <g transform="translate(1280 370) scale(.33333)">
    <Dots
      list={[[126, 62, 9], [153, 72, 7], [190, 97, 12], [133, 105, 6], [106, 127, 5], [239, 87, 6], [263, 90, 7], [387, 28, 5], [334, 70, 6], [339, 92, 5], [329, 118, 4], [520, 41, 9], [537, 67, 5], [563, 49, 11], [595, 55, 6], [598, 15, 11], [349, 161, 6], [340, 197, 9], [33, 180, 10], [59, 171, 5], [97, 171, 5], [120, 261, 5], [105, 291, 8], [44, 342, 8], [142, 345, 11], [205, 307, 6], [234, 297, 11], [269, 289, 5], [118, 369, 6], [132, 391, 8], [158, 390, 3], [195, 369, 7], [210, 408, 9], [184, 427, 5], [213, 444, 8], [351, 465, 7], [450, 426, 8], [640, 401, 8], [657, 430, 11], [641, 461, 6], [681, 458, 6], [646, 486, 8], [647, 521, 8], [673, 539, 4], [634, 181, 9], [46, 491, 6], [84, 495, 8], [36, 512, 4], [257, 512, 5], [276, 539, 6], [292, 579, 12], [316, 574, 6], [311, 602, 6], [413, 570, 6], [430, 582, 7], [575, 592, 6], [616, 591, 6], [605, 615, 4], [580, 629, 5], [45, 633, 7], [173, 633, 6], [158, 660, 8], [320, 686, 5], [282, 706, 9], [259, 744, 5], [287, 769, 6], [38, 797, 8], [124, 812, 9], [158, 831, 11], [150, 855, 5], [136, 879, 6], [170, 871, 7], [443, 748, 6], [422, 782, 5], [452, 780, 9], [565, 833, 5], [590, 834, 7], [309, 899, 10], [486, 874, 5], [498, 903, 7]]}
    />
    <Many d={STAR} list={[[92, 219, 22], [294, 138, 24], [461, 46, 24], [362, 577, 28], [333, 747, 35]]} />
    <Many d={SPARK} list={[[594, 538, 22], [179, 910, 18], [527, 857, 24]]} />
    <Pin x={657} y={42} />
    <Pin x={712} y={276} />
    <P d="M348 44 L420 78 L392 92 L414 108 L376 120Z" />
    <P d="M134 252 L140 136 Q142 122 156 122 L284 128 Q300 132 300 144 L292 252 Q290 264 278 264 L146 256 Q134 254 134 252Z M244 180 L270 200 V228 M250 172 L278 196 L280 232 M154 142 v32 M160 142 v32" />
    <Dots list={[[218, 190, 49], [218, 190, 18], [218, 190, 3], [250, 176, 9], [272, 238, 9], [160, 156, 7], [153, 223, 7], [661, 130, 36]]} />
    <P d="M632 108 Q666 120 692 150 M640 158 Q656 120 690 110 M658 94 Q650 130 668 166 M628 136 Q660 128 696 136" />
    <P d="M416 170 Q404 90 480 76 Q530 82 546 130 Q560 170 570 210 Q560 240 544 256 Q536 290 552 310 Q590 330 620 316 Q660 300 676 262 Q672 200 660 186 Q640 200 650 230 Q640 280 606 280 Q580 270 584 240 Q620 220 614 180 Q600 144 570 150 L556 160 M546 130 Q560 110 590 100 Q620 84 626 70 Q610 70 540 110 M416 170 Q426 210 430 240 Q420 290 370 304 Q330 300 340 270 Q350 250 380 240 Q384 200 378 160 Q390 140 396 190 Q400 230 420 228 M378 220 Q320 240 300 270 Q296 330 350 350 L426 346 Q420 300 450 280 M426 346 Q440 380 480 390 Q510 400 490 420 Q460 440 470 446 Q530 444 534 410 Q520 370 480 350 Q470 320 494 300 M350 352 Q320 380 334 410 Q370 420 390 420 Q370 440 368 444 Q410 450 418 410 Q400 380 390 376 Q440 380 450 400 M542 310 Q536 360 560 384 Q600 390 630 350 Q630 390 580 414 Q550 416 534 410" />
    <P d="M428 156 L530 134 V160 Q528 182 508 184 Q490 180 486 166 L478 168 Q476 190 456 196 Q436 192 436 176Z M442 166 L470 160 M496 154 L522 148" />
    <Dots list={[[497, 99, 5], [514, 111, 6], [488, 116, 4], [545, 197, 7], [390, 250, 14], [397, 274, 13], [610, 190, 10], [560, 285, 14], [440, 398, 12], [580, 374, 9], [340, 340, 12]]} />
    <Shape d={HEART} at={[158, 293, 21]} rot={-8} />
    <Dots list={[[40, 272, 33], [40, 272, 24]]} />
    <P d="M60 302 L72 298 L94 328 Q94 340 82 338Z" />
    <P d="M212 352 L292 316 Q300 320 302 350 L318 364 L296 380 L262 384 L246 402 L240 392 Q226 394 224 384Z M236 352 L272 336 L276 342 L240 358Z M240 368 L276 352 M290 352 L288 374 L300 378" />
    <P d="M36 400 Q10 376 40 370 Q60 376 54 398 Q80 374 92 400 Q94 420 66 420 Q98 440 80 456 Q62 456 50 440 Q34 470 14 456 Q10 440 30 430 Q0 426 -4 410 Q10 390 36 400Z" />
    <Dots list={[[46, 419, 9], [168, 546, 36], [168, 546, 19], [168, 516, 4], [168, 576, 4], [140, 546, 4], [196, 546, 4], [148, 524, 4], [188, 524, 4], [188, 568, 4], [148, 568, 4]]} />
    <P d="M70 550 Q90 500 170 496 Q240 500 248 544 Q240 590 160 598 Q90 600 70 550Z M118 502 L114 486 L180 468 L186 494 M134 478 L130 424 Q134 414 148 416 Q160 424 152 432 L154 474 M130 440 H154 M132 456 H154 M68 558 Q40 520 44 540 Q46 556 70 562 Q40 590 64 608 Q78 596 68 566" />
    <P d="M226 470 Q236 430 284 424 L290 434 Q306 442 302 440 L322 416 L324 436 L336 446 L306 450 Q280 480 240 480Z M250 440 Q266 456 260 478 M270 446 Q290 450 288 466" />
    <circle cx={243} cy={456} r={3} vectorEffect="non-scaling-stroke" />
    <People x={430} y={508} rot={3} />
    <Camera x={567} y={474} rot={-12} />
    <Bell x={724} y={494} rot={18} />
    <Gear x={318} y={517} r={27} />
    <P d="M520 600 Q506 570 486 562 Q480 540 498 550 Q500 530 514 534 Q530 530 534 548 Q556 540 552 560 Q536 590 518 588 M482 640 Q484 610 504 604 Q550 600 552 640 Q540 660 510 650" />
    <Ell x={400} y={664} rx={54} ry={38} />
    <P d="M362 660 Q380 634 410 634 Q438 640 440 664 Q420 690 390 692 Q366 690 362 660Z M370 640 L360 630 M410 634 V622 M438 650 L450 640 M440 670 L454 680 M386 692 L384 702 M396 628 Q390 606 402 602 Q412 610 408 624 M446 636 Q460 610 476 610 Q474 634 456 648 M348 654 Q326 648 330 662 Q334 670 348 672 M388 704 Q390 736 398 736 Q410 720 404 702" />
    <At x={258} y={634} rot={6}>
      <Box x={-44} y={-23} w={68} h={48} r={8} />
      <P d="M24 -6 L44 -18 V20 L24 8" />
      <circle cx={-28} cy={-8} r={5} vectorEffect="non-scaling-stroke" />
    </At>
    <Person x={194} y={742} />
    <Plus x={238} y={698} />
    <P d="M56 700 Q40 690 54 684 Q70 676 80 690 M82 690 L74 640 Q80 626 92 636 L100 680 L108 640 Q120 628 128 644 L126 690 Q140 740 122 764 Q90 786 62 764 Q48 730 52 704 M80 690 Q90 710 106 706 Q110 690 96 684 M106 706 Q96 724 104 742" />
    <P d="M62 812 L114 846 L84 852 L60 882Z" />
    <Dots list={[[246, 846, 50]]} />
    <Many d={HEART} list={[[224, 842, 16], [264, 832, 16]]} />
    <P d="M230 862 Q248 866 266 856 Q260 878 246 878 Q234 876 230 862Z" />
    <P d="M338 802 H450 Q460 802 460 812 V898 Q460 906 450 906 H382 L354 932 Q350 920 352 906 H338 Q328 906 328 896 V812 Q328 802 338 802Z" />
    <P d="M352 830 H362 V848 H374 V828 H384 V874 H374 V858 H362 V876 H352Z M392 846 H404 V874 H392Z" />
    <circle cx={398} cy={836} r={6} vectorEffect="non-scaling-stroke" />
    <P d="M620 600 Q640 560 690 574 Q720 600 722 660 M690 574 Q706 610 708 660 M626 590 Q634 610 622 616 Q620 640 624 660 M640 624 L654 630 L642 636 M684 616 L672 624 L684 628 M748 640 Q760 624 790 628 Q830 610 856 640" />
    <P d="M466 724 Q464 712 476 710 L530 696 M466 724 L492 816 Q496 826 508 822 L580 804 L624 818 L616 794 Q630 790 624 770 M500 740 Q506 780 540 790 Q570 780 574 760 M516 764 L556 762 Q550 786 534 786 Q520 780 516 764Z M590 790 L606 770" />
    <P d="M554 936 Q540 890 560 864 Q590 870 604 900 Q600 930 580 934 M604 936 Q620 900 632 890 Q624 850 640 838 Q650 850 648 880 Q660 850 674 850 Q678 866 660 896 L690 882 Q690 896 650 936" />
    <P d="M10 934 L116 886 Q124 890 138 936 M82 902 L92 924 L100 930" />
    <P d="M236 938 V926 L260 934 L284 924 L280 938 M420 938 Q420 920 444 926 Q466 914 470 938" />
  </g>
);

const Wallpaper = () => (
  <svg aria-hidden="true" className="absolute inset-0 h-full w-full" viewBox="472 66 1128 617" preserveAspectRatio="none" fill="none" stroke="#182027" strokeWidth="1.35" strokeLinejoin="round" strokeLinecap="round">
    <defs>
      <g id="doodles">
        <RegionA />
        <RegionB />
        <RegionC />
        <RegionD />
      </g>
    </defs>
    <use href="#doodles" x="-540" />
    <use href="#doodles" />
    <use href="#doodles" x="540" />
  </svg>
);

/* ---------- chat ---------- */

type Entry = { mine?: boolean; width: string; tracking?: string; lines: string[] };

const entries: Entry[] = [
  { mine: true, width: "w-[197px]", lines: ["Hi there. How are you today"] },
  { width: "w-[482px]", tracking: "tracking-[0.035px]", lines: ["Hello! I'm an AI assistant, so I don't have feelings, but I'm here to help", "you. How can I assist you today?"] },
  { mine: true, width: "w-[397px]", tracking: "tracking-[0.025px]", lines: ["Okay great. Can you help me out with some javascript code?"] },
  { width: "w-[482px]", tracking: "tracking-[0.06px]", lines: ["Of course! I'd be happy to help you with your JavaScript code. What do", "you need assistance with?"] },
  { mine: true, width: "w-[210px]", tracking: "tracking-[0.03px]", lines: ["How do I create an ai chat bot"] },
  {
    width: "w-[482px]",
    tracking: "tracking-[-0.035px]",
    lines: [
      "To create an AI chatbot, you can follow these steps: 1. Define the purpose",
      "and scope of your chatbot: Determine what tasks or information you want",
      "your chatbot to handle. This will help you identify the features and",
      "functionalities you need to implement. 2. Choose a platform or",
      "framework: There are several platforms and frameworks available for",
      "building chatbots, such as Dialogflow, Microsoft Bot Framework, or IBM",
      "Watson. Research and choose the one that best suits your needs and",
      "technical skills. 3. Design the conversation flow: Plan out the conversation",
      "flow and structure of your chatbot. Consider the different user inputs and",
      "possible responses your chatbot should handle. 4. Train your chatbot:",
      "Depending on the platform you choose, you may need to",
    ],
  },
  { mine: true, width: "w-[111px]", lines: ["That is helpful"] },
  { width: "w-[334px]", tracking: "tracking-[0.03px]", lines: ["I'm glad to hear that! How can I assist you further?"] },
];

const Bubble = ({ mine, width, tracking = "", lines }: Entry) => (
  <div
    className={`${width} ${tracking} ${mine ? "self-end bg-[#005c4b]" : "self-start bg-[#202c33]"} rounded-md pt-[9px] pr-3 pb-[11px] pl-[11.5px] text-[13.3px] leading-5 text-white`}
  >
    {lines.map((line) => (
      <p key={line} className="whitespace-nowrap">
        {line}
      </p>
    ))}
  </div>
);

const Sidebar = () => (
  <aside className="flex w-[472px] shrink-0 flex-col bg-[#202c33] px-3 pt-[26px]">
    <div className="flex items-center pl-[80.5px]">
      <div className="flex h-[84px] w-[84px] items-center justify-center rounded-full bg-[#10a37f]">
        <SiOpenai className="h-16 w-16 text-white" />
      </div>
      <h1 className="pt-[3px] pl-[23px] text-[28.9px] leading-10 whitespace-nowrap text-white">Chat-GPT Bot</h1>
    </div>
    <button className="mt-[34px] h-[52px] w-[447px] rounded-md bg-[#005c4b] pt-[3px] text-[18.7px] font-bold text-white">Back to main chat</button>
  </aside>
);

const ChatHeader = () => (
  <header className="flex h-16 shrink-0 items-center bg-[#202c33] pl-4">
    <div className="flex h-10 w-10 items-center justify-center rounded-full bg-[#10a37f]">
      <SiOpenai className="h-[31px] w-[31px] text-white" />
    </div>
    <div className="pt-[3px] pl-[23px] whitespace-nowrap text-[#f4f6f7]">
      <h2 className="text-[17.3px] leading-6">Chat With Bot</h2>
      <p className="mt-px text-[15.1px] leading-6 text-white">10 tries per day ... 6 remaining</p>
    </div>
  </header>
);

const Composer = () => (
  <footer className="flex h-20 shrink-0 items-center bg-[#202c33] pl-4">
    <div className="flex h-10 w-[1034px] items-center rounded-lg bg-[#2a3942] pt-[3px] pr-5 pl-[19.5px] text-[13.2px] text-[#98a3aa]">Type a message</div>
    <svg className="ml-[34px] h-[18.7px] w-[18.7px]" viewBox="0 0 24 24" fill="#aebac1">
      <path d="M1.101 21.757 23.8 12.028 1.101 2.3l.011 7.912 13.623 1.816-13.623 1.817-.011 7.912z" />
    </svg>
  </footer>
);

export default function App() {
  return (
    <div className="flex h-[765px] w-[1600px] flex-col overflow-hidden bg-[#202c33] font-['Open_Sans','Noto_Sans',sans-serif]">
      <div className="h-px shrink-0 bg-[#125f66]" />
      <div className="h-px shrink-0 bg-[#2f8388]" />
      <div className="flex h-[761px] shrink-0">
        <Sidebar />
        <main className="flex min-w-0 flex-1 flex-col">
          <ChatHeader />
          <section className="relative flex h-[617px] shrink-0 overflow-hidden bg-[#0b131a]">
            <Wallpaper />
            <div className="relative flex flex-1 flex-col gap-1.5 py-1 pr-6 pl-6">
              {entries.map((e) => (
                <Bubble key={e.lines[0]} {...e} />
              ))}
            </div>
            <div className="relative flex w-2 shrink-0 flex-col bg-black/30 pt-[18px]">
              <div className="h-[586px] bg-[#464d52]" />
            </div>
          </section>
          <Composer />
        </main>
      </div>
      <div className="flex h-0.5 shrink-0 bg-[#261f24]">
        <div className="w-9 bg-[#241e21]" />
        <div className="w-[258px] border-t border-[#b9bec1] bg-white" />
        <div className="w-[187px] bg-linear-to-r from-[#454545] via-[#3d2427] to-[#3b3030]" />
        <div className="w-8 bg-[#585858]" />
        <div className="ml-px w-[3px] bg-[#4a4a4a]" />
        <div className="ml-auto mr-1 w-px bg-[#8a8a8a]" />
      </div>
    </div>
  );
}
